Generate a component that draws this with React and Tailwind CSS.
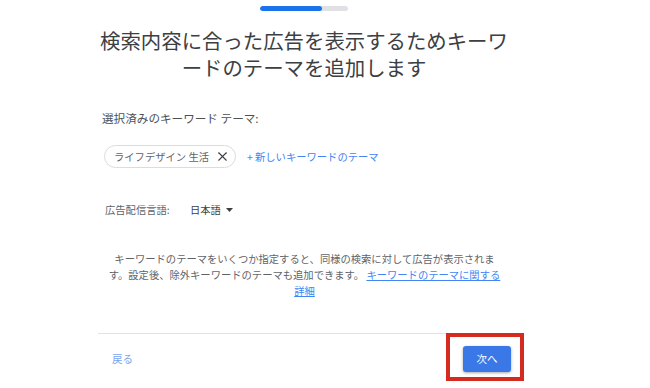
import React from "react";
import { X } from "lucide-react";

function App() {
  return (
    <div className="relative w-[650px] h-[388px] overflow-hidden bg-white font-['Noto_Sans_CJK_JP','Noto_Sans',sans-serif] text-[#3c4043]">

      {/* ── PROGRESS ── */}
      <div className="pt-[6px] pl-[260px]">
        <div className="w-[88px] h-[5px] rounded-full bg-[#dfe1e5] overflow-hidden">
          <div className="w-[62px] h-full rounded-full bg-[#1a73e8]" />
        </div>
      </div>

      {/* ── CONTENT ── */}
      <div className="ml-[98px] w-[413px] flex flex-col">
        <h1 className="-ml-[4px] w-[420px] mt-[16px] text-center text-[20.4px] leading-[27px] font-normal text-[#3c4043]">
          検索内容に合った広告を表示するためキーワードのテーマを追加します
        </h1>

        <p className="mt-[29px] ml-[4px] text-[11.6px] leading-[16px] text-[#4d5156]">
          選択済みのキーワード テーマ:
        </p>

        <div className="mt-[19px] ml-[6px] flex items-center gap-[11px]">
          <div className="h-[23px] flex items-center gap-[6px] pl-[9px] pr-[5px] border border-[#dadce0] rounded-full text-[10.3px] text-[#5f6368]">
            <span>ライフデザイン 生活</span>
            <X size={15} strokeWidth={1.7} className="text-[#3c4043]" />
          </div>
          <span className="text-[10.3px] text-[#4285f4]">+ 新しいキーワードのテーマ</span>
        </div>

        <div className="mt-[34px] ml-[7px] flex items-center h-[16px] text-[10.3px] text-[#5f6368]">
          <span className="w-[85px]">広告配信言語:</span>
          <span className="text-[#3c4043]">日本語</span>
          <svg width="7" height="4" viewBox="0 0 7 4" className="ml-[5px]">
            <polygon points="0,0 7,0 3.5,4" fill="#3c4043" />
          </svg>
        </div>

        <p className="mt-[33px] ml-[6.5px] w-[400px] text-center text-[10.3px] leading-[16px] text-[#5f6368] whitespace-nowrap">
          キーワードのテーマをいくつか指定すると、同様の検索に対して広告が表示されま
          <br />
          す。設定後、除外キーワードのテーマも追加できます。{" "}
          <span className="text-[#4285f4] underline">キーワードのテーマに関する</span>
          <br />
          <span className="text-[#4285f4] underline">詳細</span>
        </p>

        <div className="mt-[34px] h-px bg-[#e3e3e3]" />

        {/* ── FOOTER ── */}
        <div className="relative mt-[12px] flex items-center justify-between">
          <span className="ml-[14px] text-[10.5px] text-[#7aa5f0]">戻る</span>
          <button className="w-[48px] h-[26px] rounded-[3px] bg-[#3b78e7] text-white text-[10.5px] shadow-[0_1px_3px_rgba(0,0,0,0.35)]">
            次へ
          </button>
          {/* annotation */}
          <div className="absolute right-[-13px] top-[-13px] w-[78px] h-[48px] border-[4px] border-[#d52b1e]" />
        </div>
      </div>

    </div>
  );
}

export default App;
